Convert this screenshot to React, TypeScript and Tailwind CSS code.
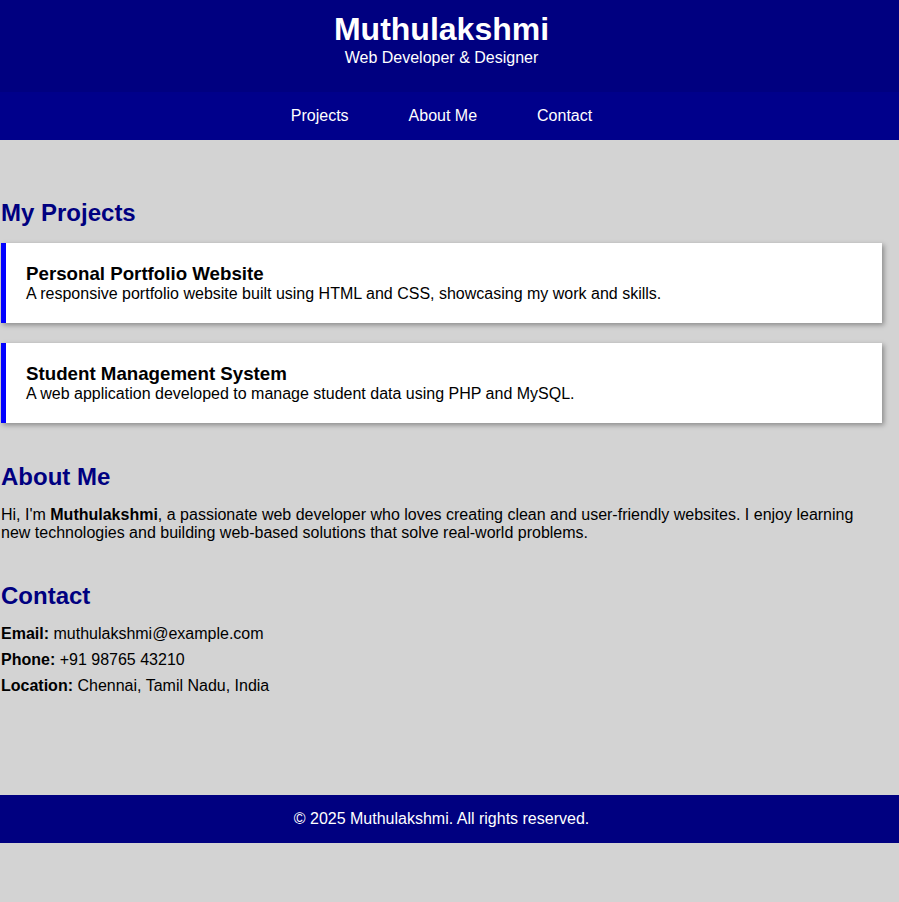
import React from 'react';

interface Project {
  title: string;
  description: string;
}

const projects: Project[] = [
  {
    title: 'Personal Portfolio Website',
    description: 'A responsive portfolio website built using HTML and CSS, showcasing my work and skills.',
  },
  {
    title: 'Student Management System',
    description: 'A web application developed to manage student data using PHP and MySQL.',
  },
];

const App: React.FC = () => {
  return (
    <div className="min-h-[902px] bg-[#d3d3d3] text-black leading-[normal] font-['Liberation_Sans',Arial,sans-serif]">
      <header className="bg-[#000080] text-white text-center pt-[11px] pr-[16px] h-[92px]">
        <h1 className="text-[32px] font-bold leading-[normal]">Muthulakshmi</h1>
        <p className="text-[16px] leading-[normal] mt-[1px]">Web Developer &amp; Designer</p>
      </header>

      <nav className="bg-[#00008b] h-[48px] flex items-center justify-center gap-[60px] pr-[16px]">
        <a href="#projects" className="text-white text-[16px]">Projects</a>
        <a href="#about" className="text-white text-[16px]">About Me</a>
        <a href="#contact" className="text-white text-[16px]">Contact</a>
      </nav>

      <main className="w-[882px] pl-[1px] pt-[59px] pb-[100px]">
        <section id="projects">
          <h2 className="text-[24px] font-bold text-[#000080] leading-[normal] mb-[16px]">My Projects</h2>
          {projects.map((p, i) => (
            <div
              key={i}
              className="bg-white border-l-[5px] border-[#0000ff] px-[20px] py-[20px] mb-[20px] shadow-[2px_2px_5px_rgba(0,0,0,0.35)]"
            >
              <h3 className="text-[18.72px] font-bold leading-[normal]">{p.title}</h3>
              <p className="text-[16px] leading-[normal]">{p.description}</p>
            </div>
          ))}
        </section>

        <section id="about" className="pt-[20px]">
          <h2 className="text-[24px] font-bold text-[#000080] leading-[normal] mb-[15px]">About Me</h2>
          <p className="text-[16px] leading-[normal]">
            Hi, I'm <strong>Muthulakshmi</strong>, a passionate web developer who loves creating clean and user-friendly
            websites. I enjoy learning new technologies and building web-based solutions that solve real-world problems.
          </p>
        </section>

        <section id="contact" className="pt-[40px]">
          <h2 className="text-[24px] font-bold text-[#000080] leading-[normal] mb-[15px]">Contact</h2>
          <p className="text-[16px] leading-[normal] mb-[8px]"><strong>Email:</strong> muthulakshmi@example.com</p>
          <p className="text-[16px] leading-[normal] mb-[8px]"><strong>Phone:</strong> +91 98765 43210</p>
          <p className="text-[16px] leading-[normal]"><strong>Location:</strong> Chennai, Tamil Nadu, India</p>
        </section>
      </main>

      <footer className="bg-[#000080] text-white h-[48px] flex items-center justify-center pr-[16px]">
        <p className="text-[16px]">© 2025 Muthulakshmi. All rights reserved.</p>
      </footer>
    </div>
  );
};

export default App;
